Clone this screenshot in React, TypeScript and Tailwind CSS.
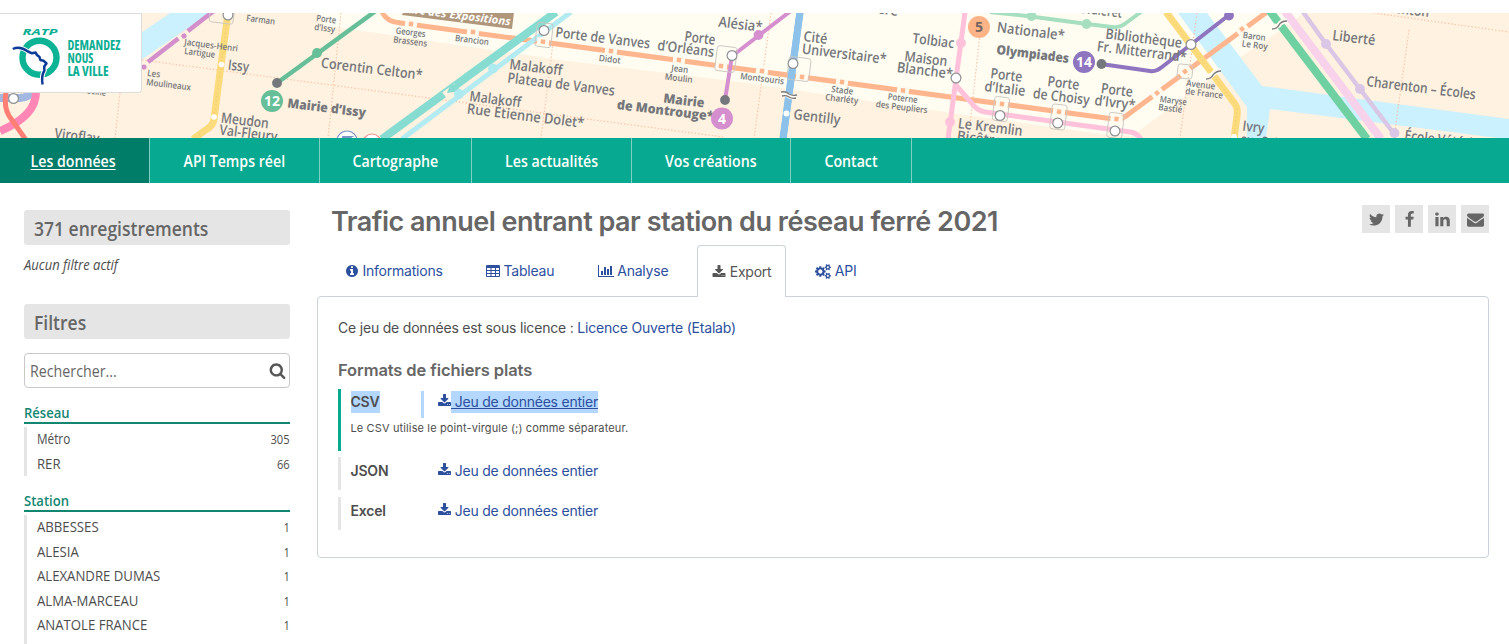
import type { ReactNode } from "react";

type IconProps = { d: string; w?: number; className?: string };

function Icon({ d, w = 1792, className = "" }: IconProps) {
  return (
    <svg viewBox={`0 0 ${w} 1792`} fill="currentColor" className={`shrink-0 ${className}`} aria-hidden="true">
      <path d={d} />
    </svg>
  );
}

const ICONS = {
  twitter:
    "M1684 408q-67 98-162 167 1 14 1 42 0 130-38 259.5t-115.5 248.5-184.5 210.5-258 146-323 54.5q-271 0-496-145 35 4 78 4 225 0 401-138-105-2-188-64.5t-114-159.5q33 5 61 5 43 0 85-11-112-23-185.5-111.5t-73.5-205.5v-4q68 38 146 41-66-44-105-115t-39-154q0-88 44-163 121 149 294.5 238.5t371.5 99.5q-8-38-8-74 0-134 94.5-228.5t228.5-94.5q140 0 236 102 109-21 205-78-37 115-142 178 93-10 186-50z",
  facebook:
    "M1343 12v264h-157q-86 0-116 36t-30 108v189h293l-39 296h-254v759h-306v-759h-255v-296h255v-218q0-186 104-288.5t277-102.5q147 0 228 12z",
  linkedin:
    "M477 625v991h-330v-991h330zm21-306q1 73-50.5 122t-135.5 49h-2q-82 0-132-49t-50-122q0-74 51.5-122.5t134.5-48.5 133 48.5 51 122.5zm1166 729v568h-329v-530q0-105-40.5-164.5t-126.5-59.5q-63 0-105.5 34.5t-63.5 85.5q-11 30-11 81v553h-329q2-399 2-647t-1-296l-1-48h329v144h-2q20-32 41-56t56.5-52 87-43.5 114.5-15.5q171 0 275 113.5t104 332.5z",
  envelope:
    "M1792 710v794q0 66-47 113t-113 47h-1472q-66 0-113-47t-47-113v-794q44 49 101 87 362 246 497 345 57 42 92.5 65.5t94.5 48 110 24.5h2q51 0 110-24.5t94.5-48 92.5-65.5q170-123 498-345 57-39 100-87zm0-294q0 79-49 151t-122 123q-376 261-468 325-10 7-42.5 31t-54 38.5-52 32.5-57.5 27-50 9h-2q-23 0-50-9t-57.5-27-52-32.5-54-38.5-42.5-31q-91-64-262-182.5t-205-142.5q-62-42-117-115.5t-55-136.5q0-78 41.5-130t118.5-52h1472q65 0 112.5 47t47.5 113z",
  download:
    "M1344 1344q0-26-19-45t-45-19-45 19-19 45 19 45 45 19 45-19 19-45zm256 0q0-26-19-45t-45-19-45 19-19 45 19 45 45 19 45-19 19-45zm128-224v320q0 40-28 68t-68 28h-1472q-40 0-68-28t-28-68v-320q0-40 28-68t68-28h465l135 136q58 56 136 56t136-56l136-136h464q40 0 68 28t28 68zm-325-569q17 41-14 70l-448 448q-18 19-45 19t-45-19l-448-448q-31-29-14-70 17-39 59-39h256v-448q0-26 19-45t45-19h256q26 0 45 19t19 45v448h256q42 0 59 39z",
  info: "M1152 1376v-160q0-14-9-23t-23-9h-96v-512q0-14-9-23t-23-9h-320q-14 0-23 9t-9 23v160q0 14 9 23t23 9h96v320h-96q-14 0-23 9t-9 23v160q0 14 9 23t23 9h448q14 0 23-9t9-23zm-128-896v-160q0-14-9-23t-23-9h-192q-14 0-23 9t-9 23v160q0 14 9 23t23 9h192q14 0 23-9t9-23zm640 416q0 209-103 385.5t-279.5 279.5-385.5 103-385.5-103-279.5-279.5-103-385.5 103-385.5 279.5-279.5 385.5-103 385.5 103 279.5 279.5 103 385.5z",
  table:
    "M160 128h1472q66 0 113 47t47 113v1216q0 66-47 113t-113 47h-1472q-66 0-113-47t-47-113v-1216q0-66 47-113t113-47zM128 512v256h448v-256zM704 512v256h448v-256zM1280 512v256h384v-256zM128 896v256h448v-256zM704 896v256h448v-256zM1280 896v256h384v-256zM128 1280v256h448v-256zM704 1280v256h448v-256zM1280 1280v256h384v-256z",
  chart:
    "M640 896v512h-256v-512h256zm384-512v1024h-256v-1024h256zm1024 1152v128h-2048v-1536h128v1408h1920zm-640-896v768h-256v-768h256zm384-384v1152h-256v-1152h256z",
  cogs: "M896 896q0-106-75-181t-181-75-181 75-75 181 75 181 181 75 181-75 75-181zm768 512q0-52-38-90t-90-38-90 38-38 90q0 53 37.5 90.5t90.5 37.5 90.5-37.5 37.5-90.5zm0-1024q0-52-38-90t-90-38-90 38-38 90q0 53 37.5 90.5t90.5 37.5 90.5-37.5 37.5-90.5zm-384 421v185q0 10-7 19.5t-16 10.5l-155 24q-11 35-32 76 34 48 90 115 7 11 7 20 0 12-7 19-23 30-82.5 89.5t-78.5 59.5q-11 0-21-7l-115-90q-37 19-77 31-11 108-23 155-7 24-30 24h-186q-11 0-20-7.5t-10-17.5l-23-153q-34-10-75-31l-118 89q-7 7-20 7-11 0-21-8-144-133-144-160 0-9 7-19 10-14 41-53t47-61q-23-44-35-82l-152-24q-10-1-17-9.5t-7-19.5v-185q0-10 7-19.5t16-10.5l155-24q11-35 32-76-34-48-90-115-7-11-7-20 0-12 7-20 22-30 82-89t79-59q11 0 21 7l115 90q34-18 77-32 11-108 23-154 7-24 30-24h186q11 0 20 7.5t10 17.5l23 153q34 10 75 31l118-89q8-7 20-7 11 0 21 8 144 133 144 160 0 8-7 19-12 16-42 54t-45 60q23 48 34 82l152 23q10 2 17 10.5t7 19.5zm640 533v140q0 16-149 31-12 27-30 52 51 113 51 138 0 4-4 7-122 71-124 71-8 0-46-47t-52-68q-20 2-30 2t-30-2q-14 21-52 68t-46 47q-2 0-124-71-4-3-4-7 0-25 51-138-18-25-30-52-149-15-149-31v-140q0-16 149-31 13-29 30-52-51-113-51-138 0-4 4-7 4-2 35-20t59-34 30-16q8 0 46 46.5t52 67.5q20-2 30-2t30 2q51-71 92-112l6-2q4 0 124 70 4 3 4 7 0 25-51 138 17 23 30 52 149 15 149 31zm0-1024v140q0 16-149 31-12 27-30 52 51 113 51 138 0 4-4 7-122 71-124 71-8 0-46-47t-52-68q-20 2-30 2t-30-2q-14 21-52 68t-46 47q-2 0-124-71-4-3-4-7 0-25 51-138-18-25-30-52-149-15-149-31v-140q0-16 149-31 13-29 30-52-51-113-51-138 0-4 4-7 4-2 35-20t59-34 30-16q8 0 46 46.5t52 67.5q20-2 30-2t30 2q51-71 92-112l6-2q4 0 124 70 4 3 4 7 0 25-51 138 17 23 30 52 149 15 149 31z",
  search:
    "M1216 832q0-185-131.5-316.5t-316.5-131.5-316.5 131.5-131.5 316.5 131.5 316.5 316.5 131.5 316.5-131.5 131.5-316.5zm512 832q0 52-38 90t-90 38q-54 0-90-38l-343-342q-179 124-399 124-143 0-273.5-55.5t-225-150-150-225-55.5-273.5 55.5-273.5 150-225 225-150 273.5-55.5 273.5 55.5 225 150 150 225 55.5 273.5q0 220-124 399l343 343q37 37 37 90z",
};

/* ---------- Metro map banner ---------- */

type Label = [text: string, x: number, y: number, width: number];

const LARGE: Label[] = [
  ["Issy", 227.5, 69.5, 21],
  ["Corentin Celton*", 320.5, 67.5, 102],
  ["Meudon", 220.5, 122.5, 48],
  ["Val-Fleury", 219, 134.5, 58],
  ["Viroflay", 54, 138, 45],
  ["Porte de Vanves", 555, 37, 95],
  ["d’Orléans", 657, 50, 57],
  ["Porte", 684, 41, 31],
  ["Alésia*", 718, 26.5, 44],
  ["Malakoff", 509, 69, 53],
  ["Plateau de Vanves", 507, 82.5, 108],
  ["Malakoff", 469, 101, 52],
  ["Rue Étienne Dolet*", 466.5, 113.5, 118],
  ["Cité", 803, 41, 24],
  ["Universitaire*", 801.5, 53.5, 85],
  ["Gentilly", 793, 119, 47],
  ["Tolbiac", 912, 43, 42],
  ["Maison", 904, 61, 43],
  ["Blanche*", 896.5, 72, 56],
  ["Nationale*", 996.5, 32, 68],
  ["Porte", 990, 78, 32],
  ["d’Italie", 984, 91, 41],
  ["Porte", 1047, 86, 32],
  ["de Choisy", 1032.5, 98, 57],
  ["Porte", 1100.5, 93, 32],
  ["d’Ivry*", 1094, 105, 41],
  ["Le Kremlin", 957.5, 128, 65],
  ["Bicêtre", 956.5, 140.5, 45],
  ["Bibliothèque", 1105, 38.5, 77],
  ["Fr. Mitterrand*", 1096.5, 51, 90],
  ["Chevaleret", 1066, 11, 56],
  ["Glacière", 846, 9.5, 52],
  ["Liberté", 1332, 40, 43],
  ["Charenton – Écoles", 1366, 86, 110],
  ["Charenton", 1367, 9.5, 62],
  ["Ivry", 1242, 130.5, 22],
  ["sur Seine", 1240.5, 144, 50],
  ["École Vétérinaire", 1404, 140, 98],
];

const SMALL: Label[] = [
  ["Farman", 246, 21, 29],
  ["Porte", 316, 21, 20],
  ["d’Issy", 314, 30, 21],
  ["Jacques-Henri", 184, 45, 54],
  ["Lartigue", 184, 54, 31],
  ["Les", 147, 76, 13],
  ["Moulineaux", 146, 85, 45],
  ["sur Seine", 74, 92, 32],
  ["Georges", 395.5, 33.5, 30],
  ["Brassens", 393, 42.5, 34],
  ["Brancion", 454.7, 41, 34],
  ["Didot", 598.5, 61, 22],
  ["Jean", 671, 71, 17],
  ["Moulin", 664.5, 79.5, 28],
  ["Montsouris", 740, 79, 44],
  ["Stade", 831, 92, 22],
  ["Charléty", 825, 100, 33],
  ["Poterne", 887.5, 99.5, 30],
  ["des Peupliers", 875.5, 107, 52],
  ["Baron", 1242.5, 38, 23],
  ["Le Roy", 1241.5, 46.5, 26],
  ["Avenue", 1186, 86, 29],
  ["de France", 1185, 94, 38],
  ["Maryse", 1159.5, 102, 27],
  ["Bastié", 1158, 110, 24],
];

const BOLD: Label[] = [
  ["Mairie d’Issy", 287, 107.5, 79],
  ["Mairie", 663, 102.5, 41],
  ["de Montrouge*", 616.5, 109, 97],
  ["Olympiades", 996, 54, 73],
];

function MapLabels({ items, size }: { items: Label[]; size: number }) {
  return (
    <>
      {items.map(([text, x, y, width], i) => (
        <text
          key={i}
          fontSize={size}
          textLength={width}
          lengthAdjust="spacingAndGlyphs"
          transform={`translate(${x} ${y}) rotate(7)`}
        >
          {text}
        </text>
      ))}
    </>
  );
}

/* Tram stops: a small square in a gap of the line. */
const TRAM_STOPS: [number, number, number][] = [
  [411, 24, 7], [473, 32, 7], [543, 41.7, 7], [611, 51, 7], [679, 60, 7], [721, 66, 7],
  [762, 71, 7], [802, 77, 7], [842, 82, 7], [903, 90.5, 7], [1002, 104, 7], [1059, 111.7, 7],
  [1116.5, 119, 7], [1157, 93, -37], [1185, 71.5, -37], [1242, 29, -37],
];

const STATIONS: [number, number][] = [
  [13.5, 98.5], [228, 15], [544, 30.5], [732, 55.5], [793, 63.5], [956, 78],
  [1000, 115.5], [1057.7, 123], [1115, 131], [1191, 44.5],
];

const DOTS: [number, number, string][] = [
  [317, 53, "#66bf98"], [758.5, 35, "#d58fce"], [961, 43, "#ffc2da"], [950, 122, "#ffc2da"],
  [1031.5, 16, "#a5dfc0"], [1086.5, 24, "#a5dfc0"], [1229, 15.5, "#8f74c0"], [493, 68.5, "#aeeaf0"],
  [459, 94, "#aeeaf0"], [1326, 44, "#dac6e5"], [1360, 89, "#dac6e5"], [1394.5, 133, "#dac6e5"],
  [277, 83, "#74777b"], [725, 100, "#74777b"], [1101.5, 64, "#74777b"],
];

const BOXES: [number, number, number, number][] = [
  [544, 35, 16, 24], [726, 59, 20, 25], [799, 69, 22, 23], [1001, 109, 15, 24],
  [1058.5, 117, 15, 25], [1115.5, 125.5, 15, 25], [1185, 71.5, 15, 14], [222, 13, 24, 20],
];

function Badge({ x, y, fill, color = "#fff", children }: { x: number; y: number; fill: string; color?: string; children: string }) {
  return (
    <g>
      <circle cx={x} cy={y} r="11" fill={fill} />
      <text x={x} y={y + 5} fill={color} fontSize="14" fontWeight="700" textAnchor="middle">
        {children}
      </text>
    </g>
  );
}

function MetroMap() {
  return (
    <svg viewBox="0 13 1509 125" className="block h-[125px] w-full overflow-hidden" preserveAspectRatio="xMidYMid slice">
      <rect y="13" width="1509" height="125" fill="#fff2e0" />
      <path d="M318 13 324 26 370 32 560 60 740 82 965 115 1100 134 1132 136 1218 72 1290 24 1303 13Z" fill="#fffdf2" />

      <g fill="#cbf0fe">
        <path d="M141 33 170 13H210L141 60Z" />
        <path d="M1178 13H1207L1262 86 1509 119V138H1498L1270 109 1266 138H1247V107Z" />
      </g>

      <g fill="none" stroke="#fbc3a8" strokeWidth="1.2" strokeDasharray="1.4 2">
        <path d="M142 60 380 91.5 723 137M341 13 328 138M120 93 115 138M553 43 541 138M771 13 754 138M981 25 970 125M1197 13 1180 138M1409 30 1394 138M1367 12 1509 32" />
      </g>

      <g fill="none" strokeLinejoin="round">
        <path d="M0 98H20Q31 97 33 90" stroke="#a3b8e0" strokeWidth="8" />
        <path d="M0 131Q36 116 36 92" stroke="#ff86b5" strokeWidth="8" />
        <path d="M6 92Q3 110 12 120L26 140" stroke="#ff7f74" strokeWidth="5" />
        <path d="M215 10 148 62" stroke="#d28fcc" strokeWidth="4.5" />
        <path d="M228 13 221 65 214 119Q213 126 207 129L193 139" stroke="#fcdb7c" strokeWidth="7" />
        <path d="M377 10 277 83" stroke="#66bf98" strokeWidth="4.5" />
        <path d="M382 12Q387 22 399 22.7L750 70 1117 119.5Q1123 119 1130 113L1267 12" stroke="#ffb68e" strokeWidth="5" />
        <path d="M556 12 382 139" stroke="#86dcd0" strokeWidth="8" />
        <path d="M571 12 402 139" stroke="#b2ebf1" strokeWidth="5" />
        <path d="M792 10 740 50 732 56 725 100" stroke="#d58fce" strokeWidth="4" />
        <path d="M800 12 783 139" stroke="#8cc1ea" strokeWidth="7" />
        <path d="M965 12 956 79 948 139M955 84 975 107Q979 111 985 112L1130 132Q1136 132 1141 139" stroke="#ffc2da" strokeWidth="5" />
        <path d="M990 12 1031 16.5 1087 24 1112 27Q1120 28 1126 23L1141 12" stroke="#a5dfc0" strokeWidth="4" />
        <path d="M1101 64 1150 71Q1156 72 1162 67L1229 15" stroke="#8f74c0" strokeWidth="4" />
        <path d="M1166 12 1235 104Q1238 108 1237 116L1234 139" stroke="#fcdb7c" strokeWidth="7" />
        <path d="M1284 10 1381 139" stroke="#f8d2ea" strokeWidth="8" />
        <path d="M1269 10 1367 139" stroke="#6fd0a1" strokeWidth="8" />
        <path d="M1303 12 1326 44 1360 89 1395 135" stroke="#dac6e5" strokeWidth="4.5" />
      </g>

      <g fill="none" stroke="#efc75e" strokeWidth="1" strokeDasharray="1 3">
        <path d="M228 13 214 119 196 138M1166 12 1237 107 1234 139" />
      </g>

      {TRAM_STOPS.map(([x, y, a], i) => (
        <g key={i} transform={`translate(${x} ${y}) rotate(${a})`}>
          <rect x="-6" y="-4" width="12" height="8" fill="#fffaee" />
          <rect x="-2.2" y="-2.2" width="4.4" height="4.4" fill="#ffb68e" />
        </g>
      ))}
      <path d="M800 12 783 139" stroke="#8cc1ea" strokeWidth="7" />
      <g transform="translate(184 36) rotate(-37)">
        <rect x="-6" y="-4" width="12" height="8" fill="#fff2e0" />
        <circle r="2.6" fill="#d28fcc" />
      </g>
      <circle cx="144" cy="67" r="2.6" fill="#d28fcc" />

      <path d="M445 96 457 87" stroke="#fff2e0" strokeWidth="9" />
      <path d="M447 93 450 85 456 84 460 91Z" fill="#86dcd0" />

      {BOXES.map(([x, y, w, h], i) => (
        <rect
          key={i}
          x={x - w / 2}
          y={y - h / 2}
          width={w}
          height={h}
          rx="2.5"
          fill="none"
          stroke="#c9c6c1"
          strokeWidth="0.9"
          transform={`rotate(7 ${x} ${y})`}
        />
      ))}
      {DOTS.map(([x, y, c], i) => (
        <circle key={i} cx={x} cy={y} r="4.9" fill={c} />
      ))}
      {STATIONS.map(([x, y], i) => (
        <circle key={i} cx={x} cy={y} r="4.9" fill="#fff" stroke="#8f9194" strokeWidth="1.2" />
      ))}
      <g fill="#fff">
        <circle cx="221.5" cy="64.5" r="2.8" />
        <circle cx="214" cy="117" r="2.8" />
        <circle cx="786.5" cy="113.5" r="3" />
        <circle cx="1234" cy="137" r="3" />
      </g>

      <g fill="none">
        <path d="M781 94Q786 93 789 96 792 98 797 97M1273 26Q1278 27 1279 25 1281 21 1287 21M1206 76Q1211 77 1213 74 1216 71 1221 71" stroke="#fffaf0" strokeWidth="5" />
        <path d="M781 92Q786 91 789 94 792 96 797 95M782 96Q786 95 789 97 792 99 796 98M1272 29Q1277 29 1279 25 1281 21 1287 21M1206 79Q1211 79 1213 75 1216 71 1221 71" stroke="#77797c" strokeWidth="1.3" />
      </g>

      <path d="M404 10 514 12 512 29 402 15Z" fill="#b0977c" />
      <g fontFamily="'Open Sans', sans-serif" fill="#74777b">
        <text
          fontSize="11"
          fontWeight="700"
          fontStyle="italic"
          fill="#fff"
          textLength="110"
          lengthAdjust="spacingAndGlyphs"
          transform="translate(401 12) rotate(7)"
        >
          Parc des Expositions
        </text>
        <g fontWeight="600">
          <MapLabels items={LARGE} size={14.3} />
        </g>
        <g fontWeight="600">
          <MapLabels items={SMALL} size={9} />
        </g>
        <g fontWeight="800">
          <MapLabels items={BOLD} size={13} />
        </g>
        <Badge x={272} y={101} fill="#66bf98">12</Badge>
        <Badge x={722} y={118.5} fill="#d58fce">4</Badge>
        <Badge x={979} y={27} fill="#ffb487" color="#75675f">5</Badge>
        <Badge x={1084} y={62} fill="#8f74c0">14</Badge>
      </g>
      <g fill="#fff" strokeWidth="1.2">
        <circle cx="347" cy="141" r="10" stroke="#7f96cc" />
        <circle cx="372" cy="143" r="9" stroke="#ee8e8e" />
        <path d="M342 137H351L345 141" stroke="#7f96cc" fill="none" strokeWidth="2" />
      </g>
    </svg>
  );
}

/* ---------- Logo ---------- */

const PROFILE =
  "M12.8 49Q20 45.5 28 51.5L32 53.3 35.5 52.5 37 55 39.5 57 40.3 60 43.5 60.7 46.5 63.5 44.2 66.5 44.4 70.5Q41 76 42.6 84.5";

function Logo() {
  return (
    <div className="absolute left-0 top-0 h-20 w-[142px] rounded-br border border-l-0 border-[#dcdcdc] bg-white">
      <svg viewBox="0 14 141 78" className="block h-[78px] w-[141px]" fontFamily="'Open Sans', sans-serif">
        <text x="22.5" y="35" fontSize="8.6" fontWeight="700" fontStyle="italic" fill="#0aae93" textLength="35" lengthAdjust="spacingAndGlyphs">
          RATP
        </text>
        <circle cx="39.5" cy="57.7" r="17" fill="none" stroke="#0db395" strokeWidth="6.4" />
        <path d={PROFILE} fill="none" stroke="#fff" strokeWidth="4.6" />
        <path d={PROFILE} fill="none" stroke="#0d3c98" strokeWidth="2.5" strokeLinejoin="round" />
        <g fill="#0aae93" fontSize="13.5" fontWeight="700" className="[font-stretch:75%]">
          <text x="67.5" y="50" textLength="53" lengthAdjust="spacingAndGlyphs">DEMANDEZ</text>
          <text x="67.5" y="63" textLength="26" lengthAdjust="spacingAndGlyphs">NOUS</text>
          <text x="67.5" y="76" textLength="41" lengthAdjust="spacingAndGlyphs">LA VILLE</text>
        </g>
      </svg>
    </div>
  );
}

/* ---------- Navigation ---------- */

const NAV = [
  { label: "Les données", width: "w-[149.5px]", active: true },
  { label: "API Temps réel", width: "w-[170px]" },
  { label: "Cartographe", width: "w-[152.5px]" },
  { label: "Les actualités", width: "w-[160px]" },
  { label: "Vos créations", width: "w-[159px]" },
  { label: "Contact", width: "w-[121px]" },
];

function Nav() {
  return (
    <nav className="flex h-[45px] bg-[#07aa90] text-base font-semibold text-white">
      {NAV.map((n) => (
        <a
          key={n.label}
          className={`flex h-full items-center justify-center whitespace-nowrap border-r border-[#7fd0c3] pt-px ${n.width} ${
            n.active ? "bg-[#007d69] pr-[3px] underline decoration-1 underline-offset-2" : ""
          }`}
        >
          <span className="scale-x-[0.885]">{n.label}</span>
        </a>
      ))}
    </nav>
  );
}

/* ---------- Sidebar ---------- */

function PanelTitle({ children }: { children: ReactNode }) {
  return (
    <h2 className="flex h-[35px] shrink-0 items-center rounded-[3px] bg-[#e5e5e5] px-[10px] pt-0.5 text-[20px] font-semibold text-[#666]">
      <span className="origin-left scale-x-[0.875]">{children}</span>
    </h2>
  );
}

function Facet({ title, rows, className }: { title: string; rows: [string, number][]; className: string }) {
  return (
    <section className={`shrink-0 ${className}`}>
      <h3 className="h-[22px] border-b-2 border-[#138671] text-[15px] font-semibold leading-5 text-[#138671]">
        <span className="inline-block origin-left scale-x-[0.87]">{title}</span>
      </h3>
      <ul className="mt-[3px] border-l-[3px] border-[#e5e5e5] pl-[9.5px] text-[#4d4d4d]">
        {rows.map(([name, count]) => (
          <li key={name} className="flex h-[24.5px] items-center justify-between">
            <span className={`origin-left text-sm font-medium ${name === "Métro" ? "scale-x-[0.84]" : "scale-x-[0.94]"}`}>{name}</span>
            <span className="origin-right scale-x-[0.93] pt-0.5 text-xs font-medium">{count}</span>
          </li>
        ))}
      </ul>
    </section>
  );
}

function Sidebar() {
  return (
    <aside className="flex w-[266px] shrink-0 flex-col pt-[27px]">
      <PanelTitle>371 enregistrements</PanelTitle>
      <p className="mt-[10px] h-5 shrink-0 text-sm font-medium italic leading-5 text-[#4d4d4d]">
        <span className="inline-block origin-left scale-x-[0.93]">Aucun filtre actif</span>
      </p>
      <div className="mt-[29px] shrink-0">
        <PanelTitle>Filtres</PanelTitle>
      </div>
      <div className="mt-[14px] flex h-[35px] shrink-0 items-center justify-between rounded-[4px] border border-[#c8c8c8] pl-[5px] pr-[3px]">
        <span className="origin-left scale-x-[0.89] pt-px text-base font-medium text-[#666]">Rechercher...</span>
        <Icon d={ICONS.search} className="size-[17px] text-[#565656]" />
      </div>
      <Facet
        className="mt-[14px]"
        title="Réseau"
        rows={[
          ["Métro", 305],
          ["RER", 66],
        ]}
      />
      <Facet
        className="mt-[14px]"
        title="Station"
        rows={[
          ["ABBESSES", 1],
          ["ALESIA", 1],
          ["ALEXANDRE DUMAS", 1],
          ["ALMA-MARCEAU", 1],
          ["ANATOLE FRANCE", 1],
        ]}
      />
      <div className="h-6 shrink-0 border-l-[3px] border-[#e5e5e5]" />
    </aside>
  );
}

/* ---------- Dataset panel ---------- */

function Tab({ icon, label, className, w, size, active }: { icon: string; label: string; className: string; w?: number; size: string; active?: boolean }) {
  return (
    <div
      className={`flex items-center gap-[3.5px] text-sm tracking-[-0.23px] ${className} ${
        active ? "relative z-10 h-[52px] rounded-t-[4px] border border-b-0 border-[#cbd2db] bg-white text-[#565656]" : "h-[51px] pt-px text-[#2c4f9e]"
      }`}
    >
      <Icon d={icon} w={w} className={size} />
      <span>{label}</span>
    </div>
  );
}

function Download({ selected }: { selected?: boolean }) {
  return (
    <a className="flex h-[22px] items-center text-sm tracking-[-0.23px] text-[#2c4f9e]">
      <Icon d={ICONS.download} className="size-[14px] -translate-x-[0.5px] -translate-y-px" />
      <span
        className={
          selected
            ? "-ml-[0.5px] h-[21.5px] whitespace-pre bg-[#b3d7ff] leading-[22px] underline"
            : "-ml-[0.5px] whitespace-pre leading-[22px]"
        }
      >
        {" Jeu de données entier"}
      </span>
    </a>
  );
}

function FormatRow({ name, className, selected, note }: { name: string; className: string; selected?: boolean; note?: string }) {
  return (
    <div className={`flex flex-col border-l-[3px] pl-[9.5px] ${className}`}>
      <div className="flex items-start">
        <div className={`flex w-[73px] shrink-0 ${selected ? "h-[27px] border-r-[3px] border-[#b3d7ff]" : ""}`}>
          <span className={`h-[22px] text-sm font-semibold leading-[22px] tracking-[-0.2px] text-[#4d4d4d] ${selected ? "bg-[#b3d7ff]" : ""}`}>
            {name}
          </span>
        </div>
        <div className="ml-[14px]">
          <Download selected={selected} />
        </div>
      </div>
      {note && <p className="mt-[3px] text-[11px] leading-[14px] tracking-[0.13px] text-[#4d4d4d]">{note}</p>}
    </div>
  );
}

function Content() {
  return (
    <main className="ml-[27px] flex w-[1172px] flex-col font-[Inter,sans-serif]">
      <div className="flex h-[62px] items-start justify-between pl-[14px] pt-[22px]">
        <h1 className="whitespace-nowrap text-[27px] font-semibold leading-[33px] tracking-[-0.49px] text-[#666]">
          Trafic annuel entrant par station du réseau ferré 2021
        </h1>
        <div className="flex gap-[5px] text-[#666]">
          {[ICONS.twitter, ICONS.facebook, ICONS.linkedin, ICONS.envelope].map((d, i) => (
            <a key={i} className="flex size-7 items-center justify-center bg-[#e5e5e5]">
              <Icon d={d} className="size-[17px]" />
            </a>
          ))}
        </div>
      </div>
      <div className="flex h-[51px]">
        <Tab icon={ICONS.info} label="Informations" className="ml-7" size="size-[14px]" />
        <Tab icon={ICONS.table} label="Tableau" className="ml-[43.5px]" size="size-[14px]" />
        <Tab icon={ICONS.chart} w={2048} label="Analyse" className="ml-[43.5px]" size="h-[14px] w-[16px]" />
        <Tab icon={ICONS.download} label="Export" className="ml-[29px] w-[89px] justify-center" size="size-[14px]" active />
        <Tab icon={ICONS.cogs} w={1920} label="API" className="ml-[29px]" size="h-[15px] w-[16px]" />
      </div>
      <section className="flex h-[262px] flex-col rounded-[4px] border border-[#cbd2db] px-5 pt-[19px] text-sm text-[#4d4d4d]">
        <p className="leading-6 tracking-[-0.2px]">
          Ce jeu de données est sous licence : <a className="text-[#2c4f9e]">Licence Ouverte (Etalab)</a>
        </p>
        <h2 className="mt-[18px] text-[16.5px] font-semibold leading-6 tracking-[-0.1px] text-[#666]">Formats de fichiers plats</h2>
        <FormatRow name="CSV" className="mt-[7px] h-[61.5px] border-[#07aa90] pt-0.5" selected note="Le CSV utilise le point-virgule (;) comme séparateur." />
        <FormatRow name="JSON" className="mt-[6.5px] h-[33px] border-[#e5e5e5] pt-[3px]" />
        <FormatRow name="Excel" className="mt-[7px] h-[33px] border-[#e5e5e5] pt-[3px]" />
      </section>
    </main>
  );
}

export default function App() {
  return (
    <div className="flex h-[644px] w-full flex-col overflow-hidden bg-white pt-[13px] font-['Open_Sans',sans-serif]">
      <header className="relative h-[125px] shrink-0">
        <MetroMap />
        <Logo />
      </header>
      <div className="shrink-0">
        <Nav />
      </div>
      <div className="flex min-h-0 grow overflow-hidden pl-6">
        <Sidebar />
        <Content />
      </div>
    </div>
  );
}
